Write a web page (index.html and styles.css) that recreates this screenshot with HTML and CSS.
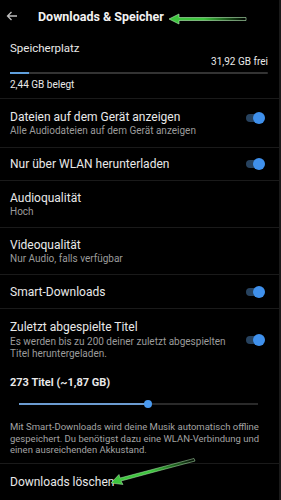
FILE: index.html
```html
<!DOCTYPE html>
<html lang="de">
<head>
<meta charset="utf-8">
<link rel="stylesheet" href="styles.css">
</head>
<body>
<div class="screen">
  <header class="header">
    <svg class="back" width="12" height="12" viewBox="0 0 12 12"><path d="M11 6H1.5M5.5 2L1.5 6l4 4" fill="none" stroke="#bdbdbd" stroke-width="1.3"/></svg>
    <h1 class="title">Downloads &amp; Speicher</h1>
    <svg class="marker marker-top" width="80" height="14" viewBox="0 0 80 14">
      <defs><linearGradient id="g1" x1="0" x2="1"><stop offset="0" stop-color="#3ec43e"/><stop offset="0.45" stop-color="#3ec43e"/><stop offset="1" stop-color="#3ec43e" stop-opacity="0"/></linearGradient></defs>
      <path d="M1 7L11 2V5.5H78V8.5H11V12Z" fill="url(#g1)" stroke="#b8f0b8" stroke-width="0.6"/>
    </svg>
  </header>

  <section class="storage">
    <div class="label">Speicherplatz</div>
    <div class="free">31,92 GB frei</div>
    <div class="bar"><div class="bar-fill" style="width:7.5%"></div></div>
    <div class="used">2,44 GB belegt</div>
  </section>

  <div class="row r-files">
    <div class="text"><div class="label">Dateien auf dem Gerät anzeigen</div><div class="sub">Alle Audiodateien auf dem Gerät anzeigen</div></div>
    <span class="toggle"></span>
  </div>
  <div class="row r-wlan">
    <div class="text"><div class="label">Nur über WLAN herunterladen</div></div>
    <span class="toggle"></span>
  </div>
  <div class="row r-audio">
    <div class="text"><div class="label">Audioqualität</div><div class="sub">Hoch</div></div>
  </div>
  <div class="row r-video">
    <div class="text"><div class="label">Videoqualität</div><div class="sub">Nur Audio, falls verfügbar</div></div>
  </div>
  <div class="row r-smart">
    <div class="text"><div class="label">Smart-Downloads</div></div>
    <span class="toggle"></span>
  </div>
  <section class="recent">
    <div class="row r-recent">
      <div class="text"><div class="label">Zuletzt abgespielte Titel</div><div class="sub">Es werden bis zu 200 deiner zuletzt abgespielten Titel heruntergeladen.</div></div>
      <span class="toggle"></span>
    </div>
    <div class="count">273 Titel (~1,87 GB)</div>
    <div class="slider"><div class="slider-fill" style="width:54%"></div><span class="thumb" style="left:54%"></span></div>
    <p class="info">Mit Smart-Downloads wird deine Musik automatisch offline gespeichert. Du benötigst dazu eine WLAN-Verbindung und einen ausreichenden Akkustand.</p>
  </section>
  <div class="row r-delete">
    <div class="label">Downloads löschen</div>
    <svg class="marker marker-bottom" width="90" height="30" viewBox="0 0 90 30">
      <defs><linearGradient id="g2" x1="0" y1="1" x2="1" y2="0"><stop offset="0" stop-color="#3ec43e"/><stop offset="0.5" stop-color="#3ec43e"/><stop offset="1" stop-color="#3ec43e" stop-opacity="0"/></linearGradient></defs>
      <path d="M1 26L9 17.5L10 21L84 1.5L85 4L11 24L13 27.5Z" fill="url(#g2)" stroke="#b8f0b8" stroke-width="0.5"/>
    </svg>
  </div>
</div>
</body>
</html>
```
FILE: styles.css
```css
html, body {
  margin: 0;
  padding: 0;
  background: #000;
}
body {
  font-family: Roboto, "Noto Sans", Arial, sans-serif;
  color: #e9e9e9;
}
.screen {
  width: 281px;
  height: 500px;
  overflow: hidden;
  border-right: 2px solid #1a1a1a;
  box-sizing: border-box;
}
.header {
  height: 32px;
  display: flex;
  align-items: center;
  position: relative;
}
.back {
  margin-left: 6px;
  margin-top: -1px;
}
.title {
  margin: 0 0 0 20px;
  font-size: 12.5px;
  font-weight: 700;
  color: #f2f2f2;
  letter-spacing: 0;
}
.marker {
  position: absolute;
}
.marker-top {
  left: 168px;
  top: 12px;
}
.storage {
  height: 67px;
  box-sizing: border-box;
  padding: 9px 10px 0 10px;
  border-bottom: 1px solid #1a1a1a;
}
.label {
  font-size: 12px;
  line-height: 14px;
  color: #e9e9e9;
}
.storage .label {
  font-size: 11.5px;
}
.free {
  text-align: right;
  font-size: 10px;
  line-height: 12px;
  margin-top: 1px;
  margin-right: 1px;
}
.bar {
  height: 2px;
  background: #333;
  margin: 4px 1px 0 0;
  border-radius: 1px;
}
.bar-fill {
  height: 100%;
  background: #5f9fdc;
}
.used {
  font-size: 10px;
  line-height: 12px;
  margin-top: 5px;
}
.row {
  display: flex;
  align-items: center;
  padding: 0 14px 0 10px;
  border-bottom: 1px solid #1a1a1a;
  position: relative;
}
.text {
  flex: 1;
}
.sub {
  font-size: 10px;
  line-height: 11.5px;
  color: #9b9b9b;
  margin-top: 1px;
}
.r-files { height: 48px; }
.r-wlan { height: 32px; }
.r-audio { height: 46px; }
.r-video { height: 46px; }
.r-smart { height: 33px; }
.r-files .toggle { margin-top: -10px; }
.toggle {
  width: 14px;
  height: 8px;
  background: #27425e;
  border-radius: 4px;
  position: relative;
  margin-right: 5px;
  flex: none;
}
.toggle::after {
  content: "";
  position: absolute;
  right: -5px;
  top: -2px;
  width: 12px;
  height: 12px;
  border-radius: 50%;
  background: #3f90ec;
}
.recent {
  border-bottom: 1px solid #1a1a1a;
  height: 155px;
  box-sizing: border-box;
}
.recent .row {
  border-bottom: none;
  padding-top: 11px;
  align-items: center;
}
.r-recent .sub {
  width: 225px;
  margin-top: 2px;
}
.count {
  font-size: 11px;
  font-weight: 700;
  padding: 0 10px;
  margin-top: 17px;
  line-height: 14px;
}
.slider {
  position: relative;
  height: 2px;
  background: #2a2a2a;
  margin: 13px 21px 0 19px;
}
.slider-fill {
  height: 100%;
  background: #6b9bd0;
}
.thumb {
  position: absolute;
  top: -3px;
  width: 8px;
  height: 8px;
  margin-left: -4px;
  border-radius: 50%;
  background: #4a9af0;
}
.info {
  font-size: 9.5px;
  line-height: 11.5px;
  color: #a3a3a3;
  margin: 16px 12px 0 10px;
}
.r-delete {
  height: 36px;
  border-bottom: none;
}
.r-delete .label {
  font-size: 12px;
}
.marker-bottom {
  left: 110px;
  top: -7px;
}
```
